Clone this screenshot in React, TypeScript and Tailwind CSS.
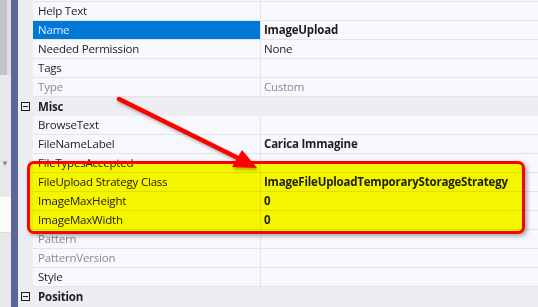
import React from "react";

type Row =
  | { kind: "prop"; name: string; value?: string; bold?: boolean; gray?: boolean; selected?: boolean }
  | { kind: "header"; name: string };

const rows: Row[] = [
  { kind: "prop", name: "Help Text" },
  { kind: "prop", name: "Name", value: "ImageUpload", bold: true, selected: true },
  { kind: "prop", name: "Needed Permission", value: "None" },
  { kind: "prop", name: "Tags" },
  { kind: "prop", name: "Type", value: "Custom", gray: true },
  { kind: "header", name: "Misc" },
  { kind: "prop", name: "BrowseText" },
  { kind: "prop", name: "FileNameLabel", value: "Carica Immagine", bold: true },
  { kind: "prop", name: "FileTypesAccepted" },
  { kind: "prop", name: "FileUpload Strategy Class", value: "ImageFileUploadTemporaryStorageStrategy", bold: true },
  { kind: "prop", name: "ImageMaxHeight", value: "0", bold: true },
  { kind: "prop", name: "ImageMaxWidth", value: "0", bold: true },
  { kind: "prop", name: "Pattern", gray: true },
  { kind: "prop", name: "PatternVersion", gray: true },
  { kind: "prop", name: "Style" },
  { kind: "header", name: "Position" },
];

function Collapse() {
  return (
    <div className="w-[15px] flex items-center justify-center">
      <div className="w-[9px] h-[9px] border border-[#1e1e1e] flex items-center justify-center">
        <div className="w-[5px] h-[1px] bg-[#1e1e1e]" />
      </div>
    </div>
  );
}

export default function App() {
  return (
    <div
      className="relative w-[538px] h-[307px] overflow-hidden flex bg-[#f6f7fb] text-[11.5px] tracking-[-0.2px] text-[#1e1e1e]"
      style={{ fontFamily: '"Open Sans", "Noto Sans", sans-serif' }}
    >
      {/* left side panel */}
      <div className="w-[11px] flex flex-col bg-[#e8e8ea]">
        <div className="h-[75px] flex">
          <div className="w-[7px] bg-[#c3c4c7]" />
          <div className="w-[4px] bg-[#dedee1]" />
        </div>
        <div className="h-[82px]" />
        <div className="h-[12px] pl-[1px] text-[8px] leading-[12px] text-[#8c8c8c]">▼</div>
        <div className="h-[28px]" />
        <div className="h-[36px] bg-[#fbfbfc] border-b border-[#dcdce0]" />
        <div className="flex-1" />
      </div>
      <div className="w-[7px] bg-[#5b6796]" />

      {/* grid */}
      <div className="flex-1 flex flex-col bg-[#eeeef2]">
        <div className="flex h-[2px]">
          <div className="w-[15px]" />
          <div className="w-[228px] bg-[#f7f8fc] border-r border-b border-[#e3e4ea]" />
          <div className="flex-1 bg-[#f7f8fc] border-b border-[#e3e4ea]" />
        </div>
        {rows.map((r, i) =>
          r.kind === "header" ? (
            <div key={i} className="flex h-[19px] shrink-0 items-center bg-[#eeeef2]">
              <Collapse />
              <div className="pl-[5px] font-bold leading-[18px]">{r.name}</div>
            </div>
          ) : (
            <div key={i} className="flex h-[19px] shrink-0">
              <div className="w-[15px]" />
              <div
                className={
                  "w-[228px] pl-[5px] leading-[18px] border-r border-b border-[#e3e4ea] whitespace-nowrap " +
                  (r.selected
                    ? "bg-[#0078d7] text-[#e4ecfb]"
                    : r.gray
                    ? "bg-[#f7f8fc] text-[#8a8a8a]"
                    : "bg-[#f7f8fc]")
                }
              >
                {r.name}
              </div>
              <div
                className={
                  "flex-1 pl-[3px] leading-[18px] bg-[#f7f8fc] border-b border-[#e3e4ea] whitespace-nowrap " +
                  (r.bold ? "font-bold " : "") +
                  (r.gray ? "text-[#8a8a8a]" : "")
                }
              >
                {r.value ?? ""}
              </div>
            </div>
          )
        )}
      </div>

      {/* yellow highlight */}
      <div className="absolute left-[27px] top-[161px] w-[498px] h-[73px] rounded-[7px] bg-[#fcfc00] mix-blend-multiply" />
      <div className="absolute left-[27px] top-[161px] w-[498px] h-[73px] rounded-[7px] border-[3px] border-[#ff0000] shadow-[2px_2px_4px_rgba(0,0,0,0.35)]" />

      {/* arrow */}
      <svg
        className="absolute left-0 top-0"
        width="538"
        height="307"
        viewBox="0 0 538 307"
        style={{ filter: "drop-shadow(1px 2px 1.5px rgba(0,0,0,0.3))" }}
      >
        <line x1="119" y1="99" x2="240" y2="159" stroke="#ff0000" strokeWidth="4.5" strokeLinecap="round" />
        <polygon points="257,168 232,167 242,150" fill="#ff0000" />
      </svg>
    </div>
  );
}
